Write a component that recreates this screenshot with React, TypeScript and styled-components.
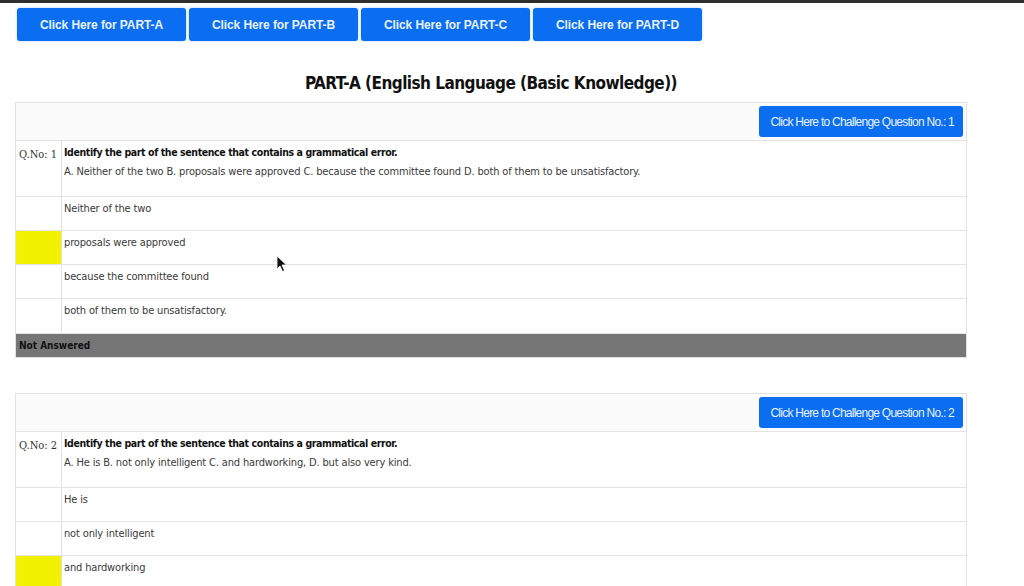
import React from "react";
import styled, { createGlobalStyle } from "styled-components";

const Global = createGlobalStyle`
  html, body { margin: 0; padding: 0; background: #ffffff; }
  body { font-family: "DejaVu Sans Condensed", "DejaVu Sans", sans-serif; color: #333; }
`;

const Page = styled.div`
  position: relative;
  width: 1024px;
  height: 586px;
  overflow: hidden;
  background: #ffffff;
  border-top: 3px solid #2e2e2e;
  box-sizing: border-box;
`;

const Content = styled.div`
  width: 952px;
  margin-left: 15px;
  display: flex;
  flex-direction: column;
`;

const PartBar = styled.div`
  display: flex;
  gap: 3px;
  padding: 5px 0 0 2px;
`;

const PartButton = styled.button`
  width: 169px;
  height: 33px;
  border: none;
  border-radius: 3px;
  background: #0b6ef0;
  color: #e8f1ff;
  font-family: "Liberation Sans", Arial, sans-serif;
  font-weight: bold;
  font-size: 12px;
  letter-spacing: -0.1px;
  box-shadow: 0 0 2px rgba(60, 150, 255, 0.6);
  cursor: pointer;
`;

const Heading = styled.h2`
  margin: 31px 0 0;
  height: 30px;
  text-align: center;
  font-family: "DejaVu Sans Condensed", "DejaVu Sans", sans-serif;
  font-weight: bold;
  font-size: 17px;
  letter-spacing: -0.55px;
  color: #111;
  line-height: 22px;
`;

const Card = styled.div<{ $gap?: number }>`
  margin-top: ${(p) => p.$gap ?? 0}px;
  border: 1px solid #e2e2e2;
  display: flex;
  flex-direction: column;
`;

const CardHeader = styled.div`
  height: 38px;
  background: #fbfbfb;
  border-bottom: 1px solid #e4e4e4;
  display: flex;
  justify-content: flex-end;
  align-items: flex-start;
  padding: 3px 3px 0 0;
  box-sizing: border-box;
`;

const ChallengeButton = styled.button`
  height: 31px;
  padding: 0 9px 0 11px;
  border: none;
  border-radius: 3px;
  background: #0b6ef0;
  color: #e8f1ff;
  font-family: "Liberation Sans", Arial, sans-serif;
  font-size: 12px;
  letter-spacing: -0.75px;
  cursor: pointer;
`;

const Row = styled.div<{ $h: number }>`
  display: grid;
  grid-template-columns: 46px 1fr;
  height: ${(p) => p.$h}px;
  border-bottom: 1px solid #e4e4e4;
  box-sizing: border-box;
  &:last-child { border-bottom: none; }
`;

const NumCell = styled.div<{ $mark?: boolean }>`
  background: ${(p) => (p.$mark ? "#f2f200" : "transparent")};
  border-right: 1px solid #e0e0e0;
  font-family: "DejaVu Serif Condensed", "Liberation Serif", serif;
  font-size: 11px;
  color: #333;
  padding: 7px 0 0 3px;
  white-space: nowrap;
`;

const TextCell = styled.div`
  padding: 2px 0 0 2px;
  font-size: 11px;
  line-height: 19px;
  letter-spacing: -0.15px;
  color: #3a3a3a;
`;

const QTitle = styled.div`
  font-weight: bold;
  font-size: 10.5px;
  letter-spacing: -0.4px;
  color: #111;
`;

const Status = styled.div`
  height: 23px;
  background: #767676;
  font-family: "DejaVu Sans Condensed", "DejaVu Sans", sans-serif;
  font-weight: bold;
  font-size: 10px;
  color: #111;
  display: flex;
  align-items: center;
  padding-left: 3px;
`;

const Cursor = styled.svg`
  position: absolute;
  left: 276px;
  top: 252px;
`;

type Q = {
  no: number;
  sentence: string;
  options: string[];
  marked: number;
  status?: string;
};

const questions: Q[] = [
  {
    no: 1,
    sentence:
      "A. Neither of the two B. proposals were approved C. because the committee found D. both of them to be unsatisfactory.",
    options: [
      "Neither of the two",
      "proposals were approved",
      "because the committee found",
      "both of them to be unsatisfactory.",
    ],
    marked: 1,
    status: "Not Answered",
  },
  {
    no: 2,
    sentence:
      "A. He is B. not only intelligent C. and hardworking, D. but also very kind.",
    options: ["He is", "not only intelligent", "and hardworking"],
    marked: 2,
  },
];

const optionHeights = [34, 34, 34, 35];

export default function App() {
  return (
    <>
      <Global />
      <Page>
        <Content>
          <PartBar>
            {["A", "B", "C", "D"].map((p) => (
              <PartButton key={p}>Click Here for PART-{p}</PartButton>
            ))}
          </PartBar>
          <Heading>PART-A (English Language (Basic Knowledge))</Heading>
          {questions.map((q, i) => (
            <Card key={q.no} $gap={i === 0 ? 0 : 35}>
              <CardHeader>
                <ChallengeButton>Click Here to Challenge Question No.: {q.no}</ChallengeButton>
              </CardHeader>
              <Row $h={56}>
                <NumCell>Q.No: {q.no}</NumCell>
                <TextCell>
                  <QTitle>Identify the part of the sentence that contains a grammatical error.</QTitle>
                  <div>{q.sentence}</div>
                </TextCell>
              </Row>
              {q.options.map((o, j) => (
                <Row key={o} $h={optionHeights[j]}>
                  <NumCell $mark={j === q.marked} />
                  <TextCell>{o}</TextCell>
                </Row>
              ))}
              {q.status && <Status>{q.status}</Status>}
            </Card>
          ))}
        </Content>
        <Cursor width="12" height="18" viewBox="0 0 12 18">
          <path d="M1 1 L1 14 L4 11 L6.5 16.5 L8.5 15.5 L6 10 L10.5 10 Z" fill="#111" stroke="#fff" strokeWidth="0.8" />
        </Cursor>
      </Page>
    </>
  );
}
